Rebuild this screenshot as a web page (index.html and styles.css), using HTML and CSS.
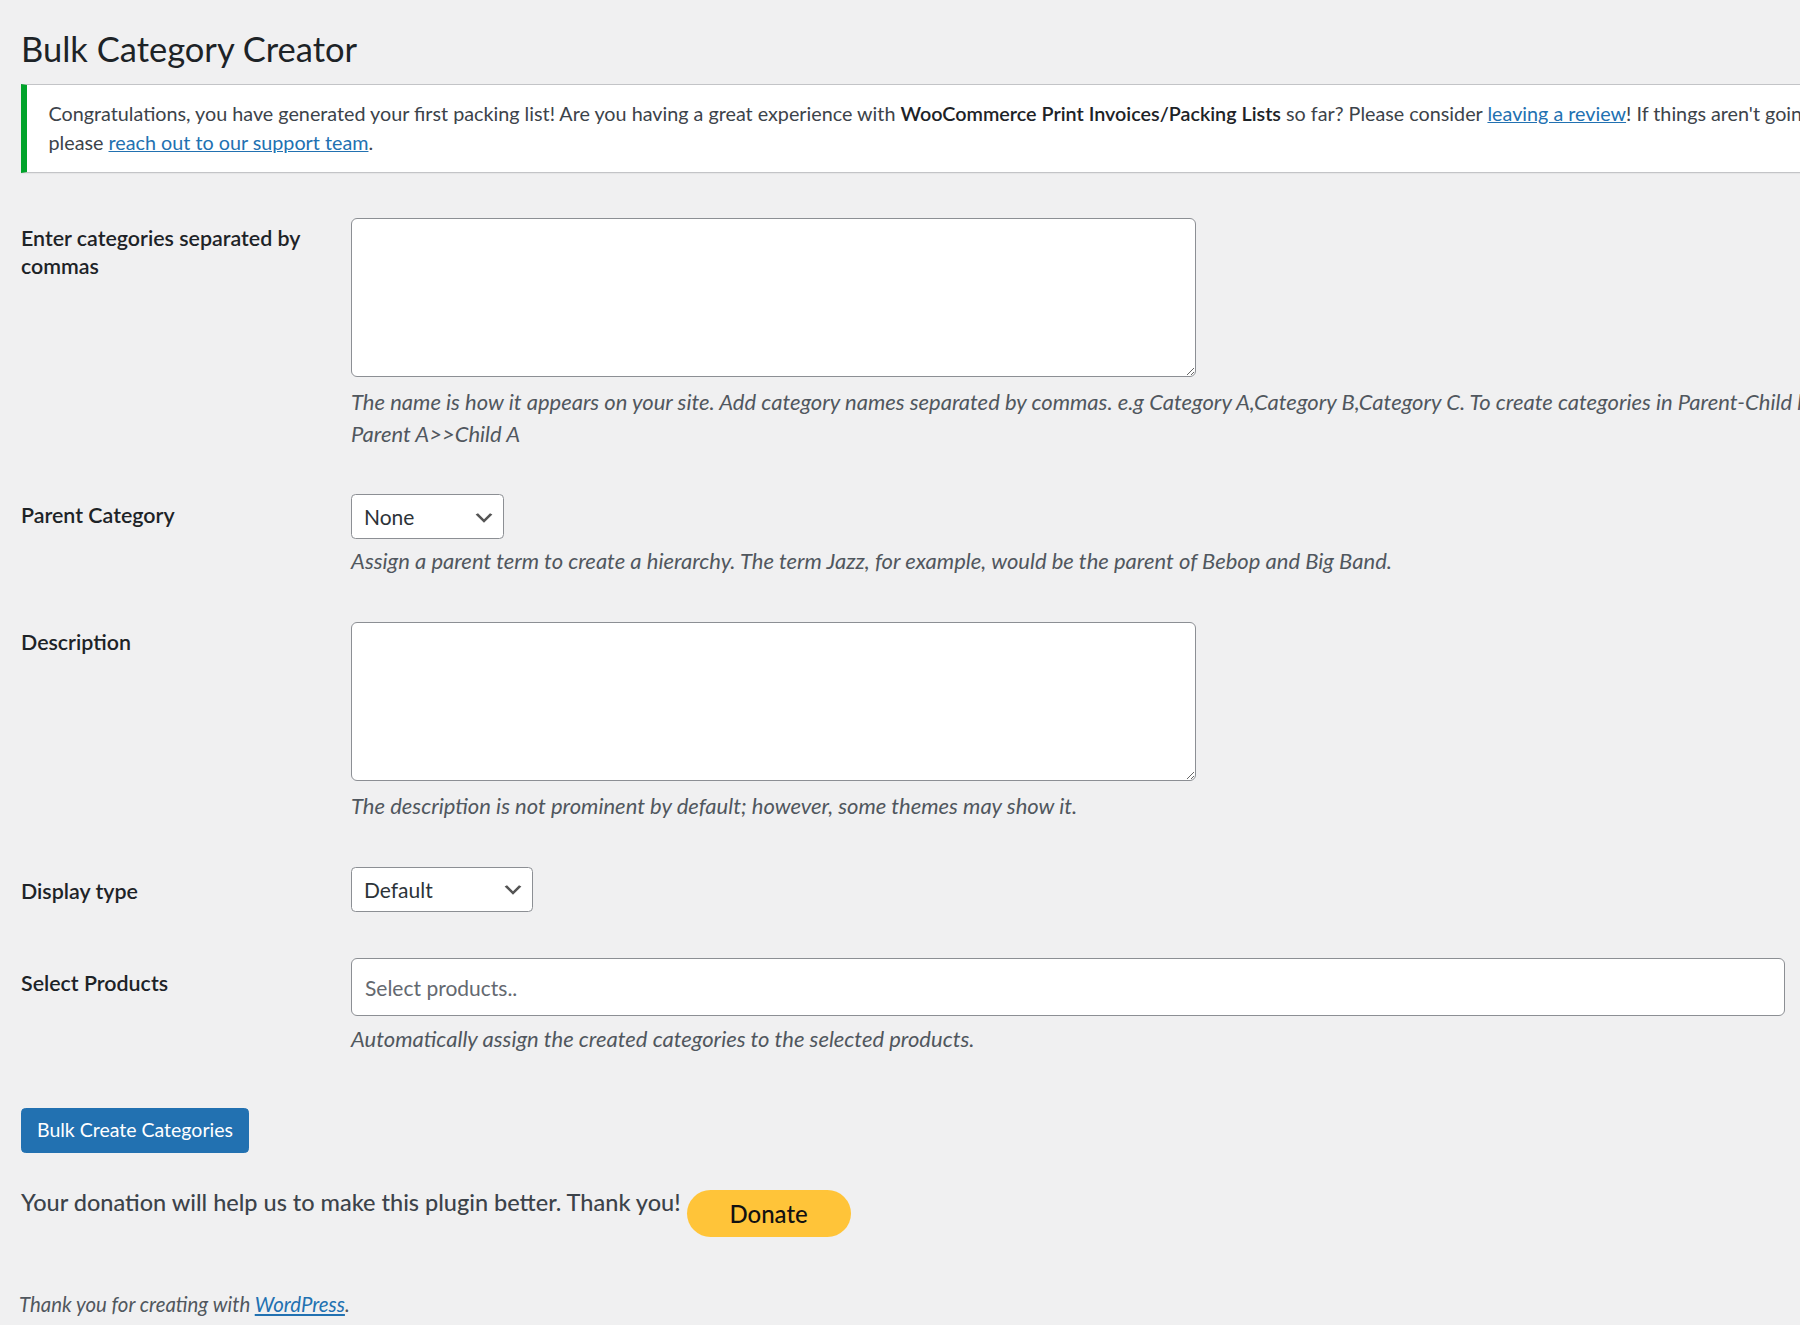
FILE: index.html
```html
<!DOCTYPE html>
<html>
<head>
<title>Bulk Category Creator</title>
<link rel="stylesheet" href="styles.css">
</head>
<body>

<div class="wrap">
  <h1 class="page-title">Bulk Category Creator</h1>

  <div class="notice notice-success">
    <p>Congratulations, you have generated your first packing list! Are you having a great experience with <strong>WooCommerce Print Invoices/Packing Lists</strong> so far? Please consider <a href="#">leaving a review</a>! If things aren't going quite as expected,<br>please <a href="#">reach out to our support team</a>.</p>
  </div>

  <form class="bulk-form">
    <table class="form-table">
      <tr>
        <th><label for="cat-names">Enter categories separated by commas</label></th>
        <td>
          <textarea id="cat-names" class="big-textarea"></textarea>
          <p class="description">The name is how it appears on your site. Add category names separated by commas. e.g Category A,Category B,Category C. To create categories in Parent-Child hierarchy, use the format<br>Parent A&gt;&gt;Child A</p>
        </td>
      </tr>
      <tr>
        <th><label for="parent-cat">Parent Category</label></th>
        <td>
          <select id="parent-cat" class="wp-select select-parent">
            <option>None</option>
          </select>
          <p class="description">Assign a parent term to create a hierarchy. The term Jazz, for example, would be the parent of Bebop and Big Band.</p>
        </td>
      </tr>
      <tr>
        <th><label for="cat-desc">Description</label></th>
        <td>
          <textarea id="cat-desc" class="big-textarea"></textarea>
          <p class="description">The description is not prominent by default; however, some themes may show it.</p>
        </td>
      </tr>
      <tr class="extra-field">
        <th><label for="display-type">Display type</label></th>
        <td>
          <select id="display-type" class="wp-select select-display">
            <option>Default</option>
          </select>
        </td>
      </tr>
      <tr class="extra-field">
        <th><label for="products">Select Products</label></th>
        <td>
          <input type="text" id="products" class="products-input" placeholder="Select products..">
          <p class="description">Automatically assign the created categories to the selected products.</p>
        </td>
      </tr>
    </table>

    <p class="submit">
      <button type="button" class="button-primary">Bulk Create Categories</button>
    </p>
  </form>

  <div class="donate-row">
    <span class="donate-text">Your donation will help us to make this plugin better. Thank you!</span>
    <a href="#" class="donate-btn">Donate</a>
  </div>
</div>

<div id="wpfooter">
  <p>Thank you for creating with <a href="#">WordPress</a>.</p>
</div>

</body>
</html>
```

FILE: styles.css
```css
html,
body {
  margin: 0;
  background: #f0f0f1;
}

body {
  overflow-x: hidden;
  font-family: Lato, "Open Sans", sans-serif;
  font-size: 19.5px;
  line-height: 1.4;
  color: #3c434a;
}

a {
  color: #2271b1;
}

.wrap {
  width: 2400px;
  margin: 15px 0 0 21px;
}

.page-title {
  margin: 0;
  padding: 12px 0 3px;
  font-size: 34.5px;
  font-weight: 400;
  line-height: 1.3;
  color: #1d2327;
}

.notice {
  margin: 9px 0 22.5px;
  padding: 1.5px 18px 1.5px 21.5px;
  background: #fff;
  border: 1px solid #c3c4c7;
  border-left: 6px solid #00a32a;
  box-shadow: 0 1px 1px rgba(0, 0, 0, 0.04);
}

.notice p {
  margin: 12.75px 0;
  font-size: 19.75px;
  line-height: 1.48;
}

.notice strong {
  font-weight: 600;
  color: #1d2327;
}

.form-table {
  border-collapse: collapse;
  margin-top: 2.5px;
}

.form-table th {
  width: 300px;
  padding: 30px 15px 30px 0;
  text-align: left;
  vertical-align: top;
  font-size: 21.4px;
  font-weight: 600;
  line-height: 1.28;
  color: #1d2327;
}

.form-table .extra-field th {
  padding-top: 34px;
}

.form-table td {
  padding: 22.5px 15px;
  vertical-align: top;
  font-size: 21px;
  line-height: 1.3;
}

.big-textarea {
  display: block;
  box-sizing: border-box;
  width: 845px;
  height: 159px;
  margin: 0 0 9.5px;
  background: #fff;
  border: 1px solid #8c8f94;
  border-radius: 6px;
  font-family: inherit;
  font-size: 21px;
}

.description {
  margin: 6px 0 0;
  font-size: 22px;
  font-style: italic;
  line-height: 31.5px;
  color: #50575e;
  white-space: nowrap;
}

.big-textarea + .description {
  margin-top: 9px;
}

.wp-select {
  display: block;
  box-sizing: border-box;
  height: 45px;
  padding: 0 36px 0 12px;
  -webkit-appearance: none;
  appearance: none;
  background: #fff url("data:image/svg+xml;charset=US-ASCII,%3Csvg%20width%3D%2220%22%20height%3D%2220%22%20xmlns%3D%22http%3A%2F%2Fwww.w3.org%2F2000%2Fsvg%22%3E%3Cpath%20d%3D%22M5%206l5%205%205-5%202%201-7%207-7-7%202-1z%22%20fill%3D%22%23555%22%2F%3E%3C%2Fsvg%3E") no-repeat right 7.5px top 55%;
  background-size: 24px 24px;
  border: 1px solid #8c8f94;
  border-radius: 4.5px;
  font-family: inherit;
  font-size: 21px;
  color: #2c3338;
}

.select-parent {
  width: 153px;
}

.select-display {
  width: 182px;
}

.products-input {
  display: block;
  box-sizing: border-box;
  width: 1434px;
  height: 58px;
  padding: 0 13px;
  background: #fff;
  border: 1px solid #8c8f94;
  border-radius: 6px;
  font-family: inherit;
  font-size: 21px;
  color: #2c3338;
}

.products-input + .description {
  margin-top: 7px;
}

.products-input::placeholder {
  color: #646970;
}

.submit {
  margin: 30.5px 0 0;
  padding: 0;
}

.button-primary {
  height: 45px;
  padding: 0 15px;
  background: #2271b1;
  border: 1px solid #2271b1;
  border-radius: 4.5px;
  font-family: inherit;
  font-size: 19.5px;
  line-height: 42px;
  color: #fff;
  cursor: pointer;
}

.donate-row {
  display: flex;
  align-items: flex-start;
  gap: 6px;
  margin-top: 37.5px;
}

.donate-text {
  font-size: 23.5px;
  font-weight: 500;
  line-height: 1.1;
  color: #3c434a;
}

.donate-btn {
  display: flex;
  align-items: center;
  justify-content: center;
  width: 164px;
  height: 47px;
  background: #ffc439;
  border-radius: 24px;
  font-size: 24px;
  font-weight: 500;
  color: #111;
  text-decoration: none;
}

#wpfooter {
  margin: 54px 0 0 19px;
}

#wpfooter p {
  margin: 0;
  font-size: 20.4px;
  font-style: italic;
  line-height: 1.35;
  color: #50575e;
}
```
